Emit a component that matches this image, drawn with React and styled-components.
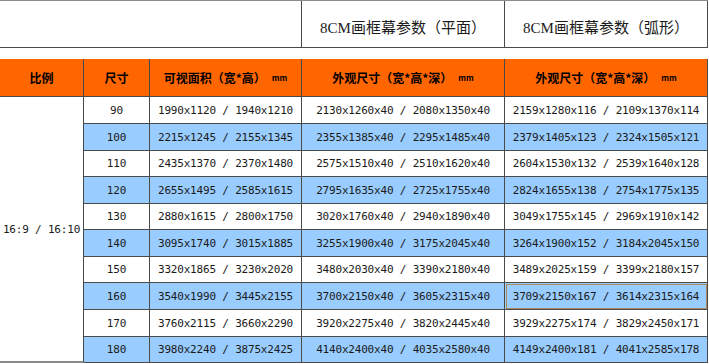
import React from "react";
import styled, { createGlobalStyle } from "styled-components";

const GlobalStyle = createGlobalStyle`
  body {
    margin: 0;
    background: #ffffff;
    font-family: "Noto Sans CJK SC", "Liberation Sans", sans-serif;
  }
`;

const COLS = "84px 66px 152px 203px 203px";
const LINE = "#4a4a4a";
const ROW_HEIGHTS = [27, 27, 26, 27, 26, 27, 26, 27, 27, 26];

const rows = [
  ["90", "1990x1120 / 1940x1210", "2130x1260x40 / 2080x1350x40", "2159x1280x116 / 2109x1370x114"],
  ["100", "2215x1245 / 2155x1345", "2355x1385x40 / 2295x1485x40", "2379x1405x123 / 2324x1505x121"],
  ["110", "2435x1370 / 2370x1480", "2575x1510x40 / 2510x1620x40", "2604x1530x132 / 2539x1640x128"],
  ["120", "2655x1495 / 2585x1615", "2795x1635x40 / 2725x1755x40", "2824x1655x138 / 2754x1775x135"],
  ["130", "2880x1615 / 2800x1750", "3020x1760x40 / 2940x1890x40", "3049x1755x145 / 2969x1910x142"],
  ["140", "3095x1740 / 3015x1885", "3255x1900x40 / 3175x2045x40", "3264x1900x152 / 3184x2045x150"],
  ["150", "3320x1865 / 3230x2020", "3480x2030x40 / 3390x2180x40", "3489x2025x159 / 3399x2180x157"],
  ["160", "3540x1990 / 3445x2155", "3700x2150x40 / 3605x2315x40", "3709x2150x167 / 3614x2315x164"],
  ["170", "3760x2115 / 3660x2290", "3920x2275x40 / 3820x2445x40", "3929x2275x174 / 3829x2450x171"],
  ["180", "3980x2240 / 3875x2425", "4140x2400x40 / 4035x2580x40", "4149x2400x181 / 4041x2585x178"],
];

const Sheet = styled.div`
  width: 708px;
  display: flex;
  flex-direction: column;
`;

const TitleBand = styled.div`
  display: grid;
  grid-template-columns: ${COLS};
  height: 48px;
  box-sizing: border-box;
  border-top: 1px solid #8c8c8c;
  border-bottom: 1px solid ${LINE};
`;

const Blank = styled.div`
  grid-column: 1 / span 3;
  border-right: 1px solid ${LINE};
`;

const TitleCell = styled.div`
  border-right: 1px solid ${LINE};
  display: flex;
  align-items: center;
  justify-content: center;
  padding-top: 4px;
  font-family: "Liberation Serif", "Noto Sans CJK SC", serif;
  font-size: 15px;
  color: #1a1a1a;
`;

const Gap = styled.div`
  height: 11px;
`;

const Grid = styled.div`
  display: grid;
  grid-template-columns: ${COLS};
  grid-template-rows: 38px ${ROW_HEIGHTS.map((h) => h + "px").join(" ")};
`;

const Head = styled.div`
  background: #ff6600;
  border-right: 1px solid ${LINE};
  border-bottom: 1px solid ${LINE};
  display: flex;
  align-items: center;
  justify-content: center;
  font-family: "Noto Sans CJK SC", sans-serif;
  font-weight: 700;
  font-size: 12px;
  color: #000;
  small {
    font-size: 8px;
    font-weight: 700;
    margin-left: 6px;
  }
`;

const numberFont = `
  font-family: "DejaVu Sans Mono", "Liberation Mono", monospace;
  font-size: 11px;
  letter-spacing: -0.19px;
  color: #1a1a1a;
`;

const Ratio = styled.div`
  grid-column: 1;
  grid-row: 2 / span 10;
  border-right: 1px solid ${LINE};
  border-bottom: 2px solid #8a8a8a;
  display: flex;
  align-items: center;
  justify-content: center;
  ${numberFont}
`;

const Cell = styled.div`
  background: ${(p) => (p.$blue ? "#99ccff" : "#ffffff")};
  border-right: 1px solid ${LINE};
  border-bottom: 1px solid ${LINE};
  display: flex;
  align-items: center;
  justify-content: center;
  ${numberFont}
  white-space: nowrap;
  outline: ${(p) => (p.$selected ? "1px solid #b08c5c" : "none")};
  outline-offset: -2px;
`;

export default function App() {
  return (
    <>
      <GlobalStyle />
      <Sheet>
        <TitleBand>
          <Blank />
          <TitleCell>8CM画框幕参数（平面）</TitleCell>
          <TitleCell>8CM画框幕参数（弧形）</TitleCell>
        </TitleBand>
        <Gap />
        <Grid>
          <Head>比例</Head>
          <Head>尺寸</Head>
          <Head>可视面积（宽*高）<small>mm</small></Head>
          <Head>外观尺寸（宽*高*深）<small>mm</small></Head>
          <Head>外观尺寸（宽*高*深）<small>mm</small></Head>
          <Ratio>16:9 / 16:10</Ratio>
          {rows.map((r, i) =>
            r.map((v, j) => (
              <Cell
                key={i + "-" + j}
                $blue={i % 2 === 1}
                $selected={i === 7 && j === 3}
              >
                {v}
              </Cell>
            ))
          )}
        </Grid>
      </Sheet>
    </>
  );
}
